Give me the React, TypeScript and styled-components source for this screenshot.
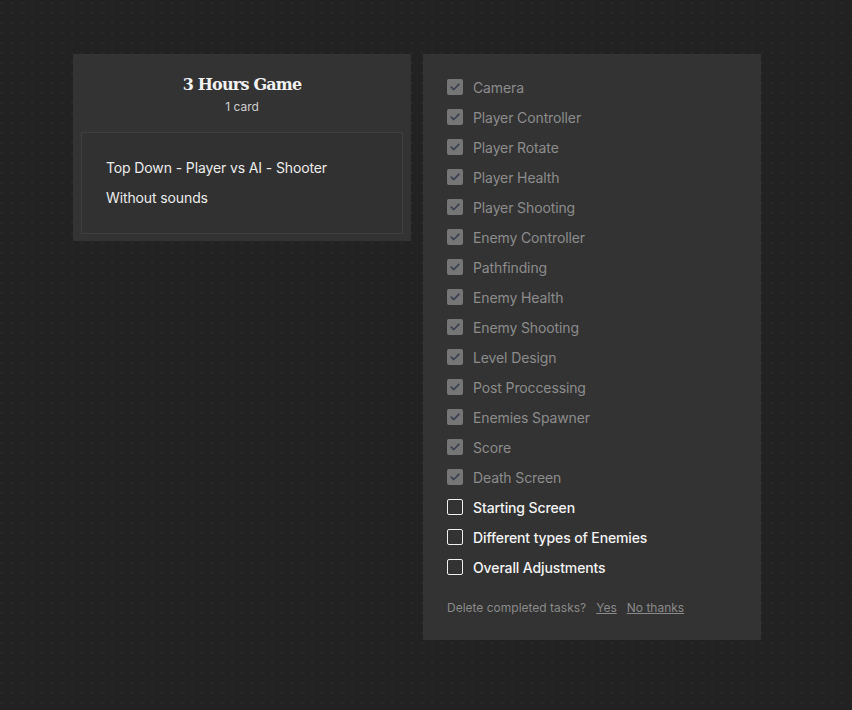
import React from "react";
import styled, { createGlobalStyle } from "styled-components";

const Global = createGlobalStyle`
  html, body { margin: 0; padding: 0; }
  body {
    background-color: #222222;
    background-image: radial-gradient(circle at 1px 1px, #292929 1px, transparent 1.5px);
    background-size: 10px 10px;
    background-position: 1px 2px;
    min-height: 710px;
    font-family: Inter, "Noto Sans", sans-serif;
  }
`;

const Board = styled.div`
  display: flex;
  align-items: flex-start;
  gap: 12px;
  padding: 54px 0 0 73px;
`;

const Panel = styled.section`
  width: 338px;
  background: #333333;
  box-sizing: border-box;
`;

const ListPanel = styled(Panel)`
  padding: 8px 8px 7px;
`;

const Title = styled.h2`
  margin: 12px 0 0;
  text-align: center;
  font-family: "DejaVu Serif", "Liberation Serif", serif;
  font-weight: 700;
  font-size: 16px;
  line-height: 22px;
  letter-spacing: -0.8px;
  color: #f2f2f2;
`;

const Count = styled.div`
  text-align: center;
  font-size: 12px;
  line-height: 16px;
  color: #cfcfcf;
  margin-top: 3px;
`;

const Card = styled.div`
  margin-top: 17px;
  border: 1px solid #3f3f3f;
  background: #313131;
  padding: 20px 24px 20px;
`;

const CardLine = styled.div`
  font-size: 14px;
  line-height: 30px;
  letter-spacing: -0.12px;
  color: #ececec;
`;

const TaskPanel = styled(Panel)`
  padding: 18px 24px 24px;
`;

const Task = styled.label<{ $done: boolean }>`
  display: flex;
  align-items: center;
  gap: 10px;
  height: 30px;
  font-size: 14px;
  letter-spacing: -0.12px;
  font-weight: ${(p) => (p.$done ? 400 : 500)};
  color: ${(p) => (p.$done ? "#8c8c8c" : "#f4f4f4")};
`;

const Box = styled.span<{ $done: boolean }>`
  width: 16px;
  height: 16px;
  box-sizing: border-box;
  border-radius: 2px;
  flex: none;
  display: flex;
  align-items: center;
  justify-content: center;
  background: ${(p) => (p.$done ? "#767676" : "transparent")};
  border: ${(p) => (p.$done ? "none" : "1.5px solid #f0f0f0")};
`;

const Footer = styled.div`
  margin-top: 18px;
  font-size: 12px;
  line-height: 16px;
  color: #8a8a8a;
  display: flex;
  gap: 10px;
`;

const FooterLink = styled.a`
  color: #8a8a8a;
  text-decoration: underline;
  cursor: pointer;
`;

const Links = styled.span`
  display: flex;
  gap: 10px;
`;

const tasks: [string, boolean][] = [
  ["Camera", true],
  ["Player Controller", true],
  ["Player Rotate", true],
  ["Player Health", true],
  ["Player Shooting", true],
  ["Enemy Controller", true],
  ["Pathfinding", true],
  ["Enemy Health", true],
  ["Enemy Shooting", true],
  ["Level Design", true],
  ["Post Proccessing", true],
  ["Enemies Spawner", true],
  ["Score", true],
  ["Death Screen", true],
  ["Starting Screen", false],
  ["Different types of Enemies", false],
  ["Overall Adjustments", false],
];

const Check = () => (
  <svg width="10" height="8" viewBox="0 0 10 8" fill="none">
    <path d="M1.2 4.1 L3.8 6.5 L8.8 1.3" stroke="#3c4252" strokeWidth="1.8" strokeLinecap="round" strokeLinejoin="round" />
  </svg>
);

export default function App() {
  return (
    <>
      <Global />
      <Board>
        <ListPanel>
          <Title>3 Hours Game</Title>
          <Count>1 card</Count>
          <Card>
            <CardLine>Top Down - Player vs AI - Shooter</CardLine>
            <CardLine>Without sounds</CardLine>
          </Card>
        </ListPanel>
        <TaskPanel>
          {tasks.map(([name, done]) => (
            <Task key={name} $done={done}>
              <Box $done={done}>{done && <Check />}</Box>
              {name}
            </Task>
          ))}
          <Footer>
            Delete completed tasks?
            <Links>
              <FooterLink>Yes</FooterLink>
              <FooterLink>No thanks</FooterLink>
            </Links>
          </Footer>
        </TaskPanel>
      </Board>
    </>
  );
}
